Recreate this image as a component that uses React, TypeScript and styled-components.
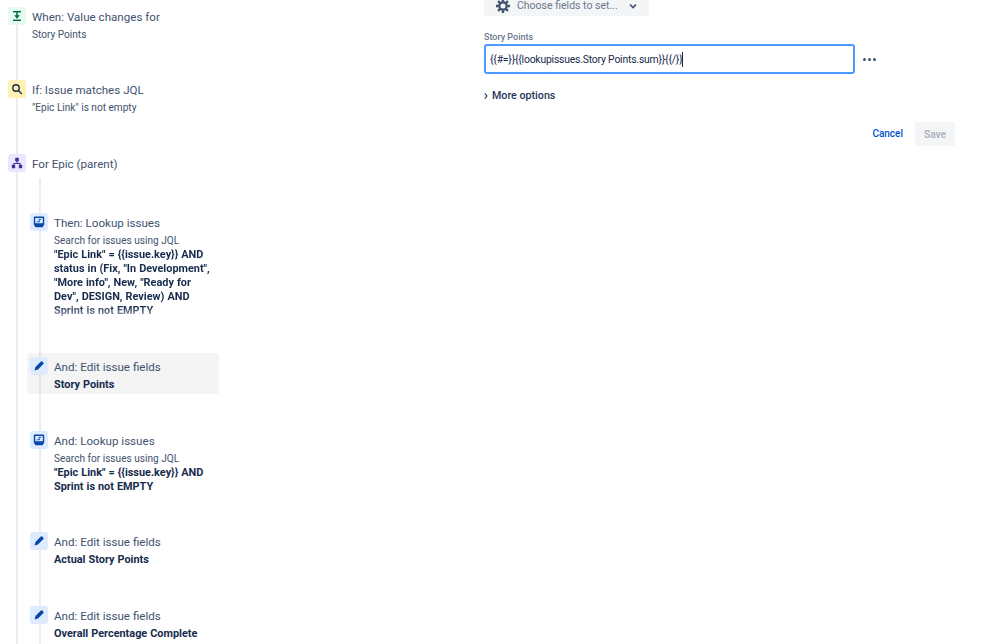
import React from 'react';
import styled, { createGlobalStyle } from 'styled-components';

const GlobalStyle = createGlobalStyle`
    html, body {
        margin: 0;
        padding: 0;
        background: #FFFFFF;
    }
    body {
        font-family: Roboto, "Noto Sans", sans-serif;
        overflow: hidden;
    }
    svg {
        flex-shrink: 0;
    }
`;

const Page = styled.div`
    display: flex;
    width: 999px;
    height: 644px;
    overflow: hidden;
    background: #FFFFFF;
`;

const Sidebar = styled.div`
    position: relative;
    width: 484px;
    flex-shrink: 0;
    padding: 7px 0 0 8px;
    box-sizing: border-box;

    &::before {
        content: '';
        position: absolute;
        left: 16px;
        top: 20px;
        bottom: 0;
        width: 2px;
        background: #EBECF0;
    }
`;

const Nested = styled.div`
    position: relative;
    margin-left: 19px;
    width: 192px;

    &::before {
        content: '';
        position: absolute;
        left: 12px;
        top: -31px;
        height: 480px;
        width: 2px;
        background: #EBECF0;
    }
`;

const Step = styled.div<{ $height: number; $nested?: boolean }>`
    position: relative;
    display: flex;
    gap: 6px;
    height: ${p => p.$height}px;
    box-sizing: border-box;
    align-items: flex-start;
    ${p => (p.$nested ? 'padding: 4px 3px 0;' : '')}
`;

const Highlight = styled.div`
    position: absolute;
    top: 0;
    left: 0;
    right: 0;
    height: 41px;
    border-radius: 3px;
    background: rgba(0, 0, 0, 0.045);
`;

const Tile = styled.div<{ $bg: string; $fg: string }>`
    position: relative;
    display: flex;
    align-items: center;
    justify-content: center;
    width: 18px;
    height: 18px;
    flex-shrink: 0;
    border-radius: 3px;
    background: ${p => p.$bg};
    color: ${p => p.$fg};
`;

const StepBody = styled.div`
    position: relative;
    min-width: 0;
    width: 163px;
`;

const StepTitle = styled.div`
    font-size: 11.6px;
    line-height: 20px;
    margin-bottom: 1px;
    color: #42526E;
    white-space: nowrap;
`;

const StepText = styled.div`
    font-size: 10.1px;
    line-height: 14px;
    color: #42526E;
    white-space: nowrap;
`;

const StepStrong = styled.div<{ $fade?: boolean }>`
    font-size: 10.9px;
    line-height: 14px;
    font-weight: 700;
    word-spacing: 0.3px;
    color: #172B4D;
    white-space: nowrap;
    ${p =>
        p.$fade
            ? '-webkit-mask-image: linear-gradient(to bottom, #000 58px, rgba(0,0,0,0.35) 70px); mask-image: linear-gradient(to bottom, #000 58px, rgba(0,0,0,0.35) 70px);'
            : ''}
`;

const Panel = styled.div`
    display: flex;
    flex-direction: column;
    align-items: flex-start;
    width: 471px;
    margin-top: -5px;
`;

const FieldPicker = styled.div`
    display: flex;
    align-items: center;
    width: 165px;
    height: 21px;
    box-sizing: border-box;
    padding: 0 11px;
    border-radius: 3px;
    background: #F4F5F7;
    color: #42526E;
`;

const PickerLabel = styled.span`
    margin-left: 6px;
    font-size: 10.5px;
    line-height: 11px;
    color: #6B778C;
    white-space: nowrap;
`;

const PickerChevron = styled.span`
    display: flex;
    margin-left: 10px;
`;

const FieldLabel = styled.label`
    margin-top: 15px;
    font-size: 9px;
    line-height: 12px;
    font-weight: 500;
    color: #6B778C;
`;

const FieldRow = styled.div`
    display: flex;
    align-items: center;
    margin-top: 1px;
`;

const SmartInput = styled.div`
    display: flex;
    align-items: center;
    width: 371px;
    height: 30px;
    box-sizing: border-box;
    padding: 0 4px;
    border: 2px solid #4C9AFF;
    border-radius: 3px;
    font-size: 10.4px;
    letter-spacing: -0.2px;
    color: #172B4D;
    white-space: nowrap;
`;

const Caret = styled.span`
    width: 1px;
    height: 15px;
    background: #172B4D;
`;

const MoreButton = styled.div`
    display: flex;
    gap: 2px;
    margin-left: 8px;
`;

const Dot = styled.span`
    width: 3px;
    height: 3px;
    border-radius: 50%;
    background: #42526E;
`;

const Disclosure = styled.div`
    display: flex;
    align-items: center;
    gap: 4px;
    margin-top: 14px;
    font-size: 10.7px;
    line-height: 16px;
    font-weight: 500;
    color: #253858;
`;

const Actions = styled.div`
    display: flex;
    align-items: center;
    justify-content: flex-end;
    align-self: stretch;
    gap: 12px;
    margin-top: 18px;
`;

const CancelButton = styled.button`
    padding: 0 0 1px;
    border: 0;
    background: none;
    font: 500 10px Roboto, sans-serif;
    color: #0052CC;
`;

const SaveButton = styled.button`
    width: 40px;
    height: 24px;
    padding: 0;
    border: 0;
    border-radius: 3px;
    background: #F4F5F7;
    font: 500 10.2px Roboto, sans-serif;
    color: #A5ADBA;
`;

const Trigger = () => (
    <svg width="12" height="12" viewBox="0 0 12 12" fill="currentColor">
        <rect x="2" y="1" width="8" height="1.4" />
        <rect x="2" y="9.6" width="8" height="1.4" />
        <rect x="5.3" y="2" width="1.4" height="4" />
        <path d="M3.2 5.2h5.6L6 8.8z" />
    </svg>
);

const Search = () => (
    <svg width="12" height="12" viewBox="0 0 12 12" fill="none" stroke="currentColor" strokeWidth="1.4">
        <circle cx="5" cy="5" r="3.2" />
        <path d="M7.4 7.4l3 3" strokeLinecap="round" />
    </svg>
);

const Branch = () => (
    <svg width="12" height="12" viewBox="0 0 12 12" fill="currentColor">
        <rect x="4.2" y="0.8" width="3.6" height="3.6" rx="0.6" />
        <rect x="0.8" y="7.8" width="3.4" height="3.4" rx="0.6" />
        <rect x="7.8" y="7.8" width="3.4" height="3.4" rx="0.6" />
        <path d="M5.5 4h1v2h3.1v2h-1V7H3.4v1h-1V6h3.1z" />
    </svg>
);

const Lookup = () => (
    <svg width="12" height="12" viewBox="0 0 12 12">
        <path d="M.8 1.6a1 1 0 0 1 1-1h8.4a1 1 0 0 1 1 1v7L9.6 11.2H2.4L.8 8.6z" fill="currentColor" />
        <rect x="2.2" y="2" width="7.6" height="5.2" rx="0.4" fill="#DEEBFF" />
        <path d="M3.6 5.8h2.8V4.2M5.6 3.4h2.6" stroke="currentColor" strokeWidth="0.9" fill="none" />
    </svg>
);

const Pencil = () => (
    <svg width="12" height="12" viewBox="0 0 12 12" fill="currentColor">
        <path d="M7.9 1.6a.9.9 0 0 1 1.3 0l1.2 1.2a.9.9 0 0 1 0 1.3L5 9.5 1.6 10.4 2.5 7z" />
    </svg>
);

const Gear = () => (
    <svg width="16" height="16" viewBox="0 0 24 24" fill="none" stroke="currentColor">
        <circle cx="12" cy="12" r="5.5" strokeWidth="3.4" />
        <path
            d="M12 1.5v4M12 18.5v4M1.5 12h4M18.5 12h4M4.6 4.6l2.8 2.8M16.6 16.6l2.8 2.8M4.6 19.4l2.8-2.8M16.6 7.4l2.8-2.8"
            strokeWidth="3.6"
        />
    </svg>
);

const Chevron = () => (
    <svg width="10" height="10" viewBox="0 0 10 10" fill="none" stroke="currentColor" strokeWidth="1.6">
        <path d="M2 3.5l3 3 3-3" />
    </svg>
);

const ChevronRight = () => (
    <svg width="4" height="8" viewBox="0 0 4 8" fill="none" stroke="#253858" strokeWidth="1.1">
        <path d="M0.8 1.4L3 4 0.8 6.6" />
    </svg>
);

const green = { $bg: '#E3FCEF', $fg: '#006644' };
const yellow = { $bg: '#FFF0B3', $fg: '#172B4D' };
const purple = { $bg: '#EAE6FF', $fg: '#403294' };
const blue = { $bg: '#DEEBFF', $fg: '#0747A6' };

const App: React.FC = () => {
    return (
        <Page>
            <GlobalStyle />
            <Sidebar>
                <Step $height={73}>
                    <Tile {...green}><Trigger /></Tile>
                    <StepBody>
                        <StepTitle>When: Value changes for</StepTitle>
                        <StepText>Story Points</StepText>
                    </StepBody>
                </Step>
                <Step $height={74}>
                    <Tile {...yellow}><Search /></Tile>
                    <StepBody>
                        <StepTitle>If: Issue matches JQL</StepTitle>
                        <StepText>"Epic Link" is not empty</StepText>
                    </StepBody>
                </Step>
                <Step $height={55}>
                    <Tile {...purple}><Branch /></Tile>
                    <StepBody>
                        <StepTitle>For Epic (parent)</StepTitle>
                    </StepBody>
                </Step>
                <Nested>
                    <Step $height={144} $nested>
                        <Tile {...blue}><Lookup /></Tile>
                        <StepBody>
                            <StepTitle>Then: Lookup issues</StepTitle>
                            <StepText>Search for issues using JQL</StepText>
                            <StepStrong $fade>
                                "Epic Link" = {'{{issue.key}}'} AND<br />
                                status in (Fix, "In Development",<br />
                                "More info", New, "Ready for<br />
                                Dev", DESIGN, Review) AND<br />
                                Sprint is not EMPTY
                            </StepStrong>
                        </StepBody>
                    </Step>
                    <Step $height={74} $nested>
                        <Highlight />
                        <Tile {...blue}><Pencil /></Tile>
                        <StepBody>
                            <StepTitle>And: Edit issue fields</StepTitle>
                            <StepStrong>Story Points</StepStrong>
                        </StepBody>
                    </Step>
                    <Step $height={101} $nested>
                        <Tile {...blue}><Lookup /></Tile>
                        <StepBody>
                            <StepTitle>And: Lookup issues</StepTitle>
                            <StepText>Search for issues using JQL</StepText>
                            <StepStrong>
                                "Epic Link" = {'{{issue.key}}'} AND<br />
                                Sprint is not EMPTY
                            </StepStrong>
                        </StepBody>
                    </Step>
                    <Step $height={74} $nested>
                        <Tile {...blue}><Pencil /></Tile>
                        <StepBody>
                            <StepTitle>And: Edit issue fields</StepTitle>
                            <StepStrong>Actual Story Points</StepStrong>
                        </StepBody>
                    </Step>
                    <Step $height={42} $nested>
                        <Tile {...blue}><Pencil /></Tile>
                        <StepBody>
                            <StepTitle>And: Edit issue fields</StepTitle>
                            <StepStrong>Overall Percentage Complete</StepStrong>
                        </StepBody>
                    </Step>
                </Nested>
            </Sidebar>
            <Panel>
                <FieldPicker>
                    <Gear />
                    <PickerLabel>Choose fields to set...</PickerLabel>
                    <PickerChevron><Chevron /></PickerChevron>
                </FieldPicker>
                <FieldLabel>Story Points</FieldLabel>
                <FieldRow>
                    <SmartInput>
                        {'{{#=}}{{lookupissues.Story Points.sum}}{{/}}'}
                        <Caret />
                    </SmartInput>
                    <MoreButton><Dot /><Dot /><Dot /></MoreButton>
                </FieldRow>
                <Disclosure><ChevronRight />More options</Disclosure>
                <Actions>
                    <CancelButton>Cancel</CancelButton>
                    <SaveButton>Save</SaveButton>
                </Actions>
            </Panel>
        </Page>
    );
};

export default App;
